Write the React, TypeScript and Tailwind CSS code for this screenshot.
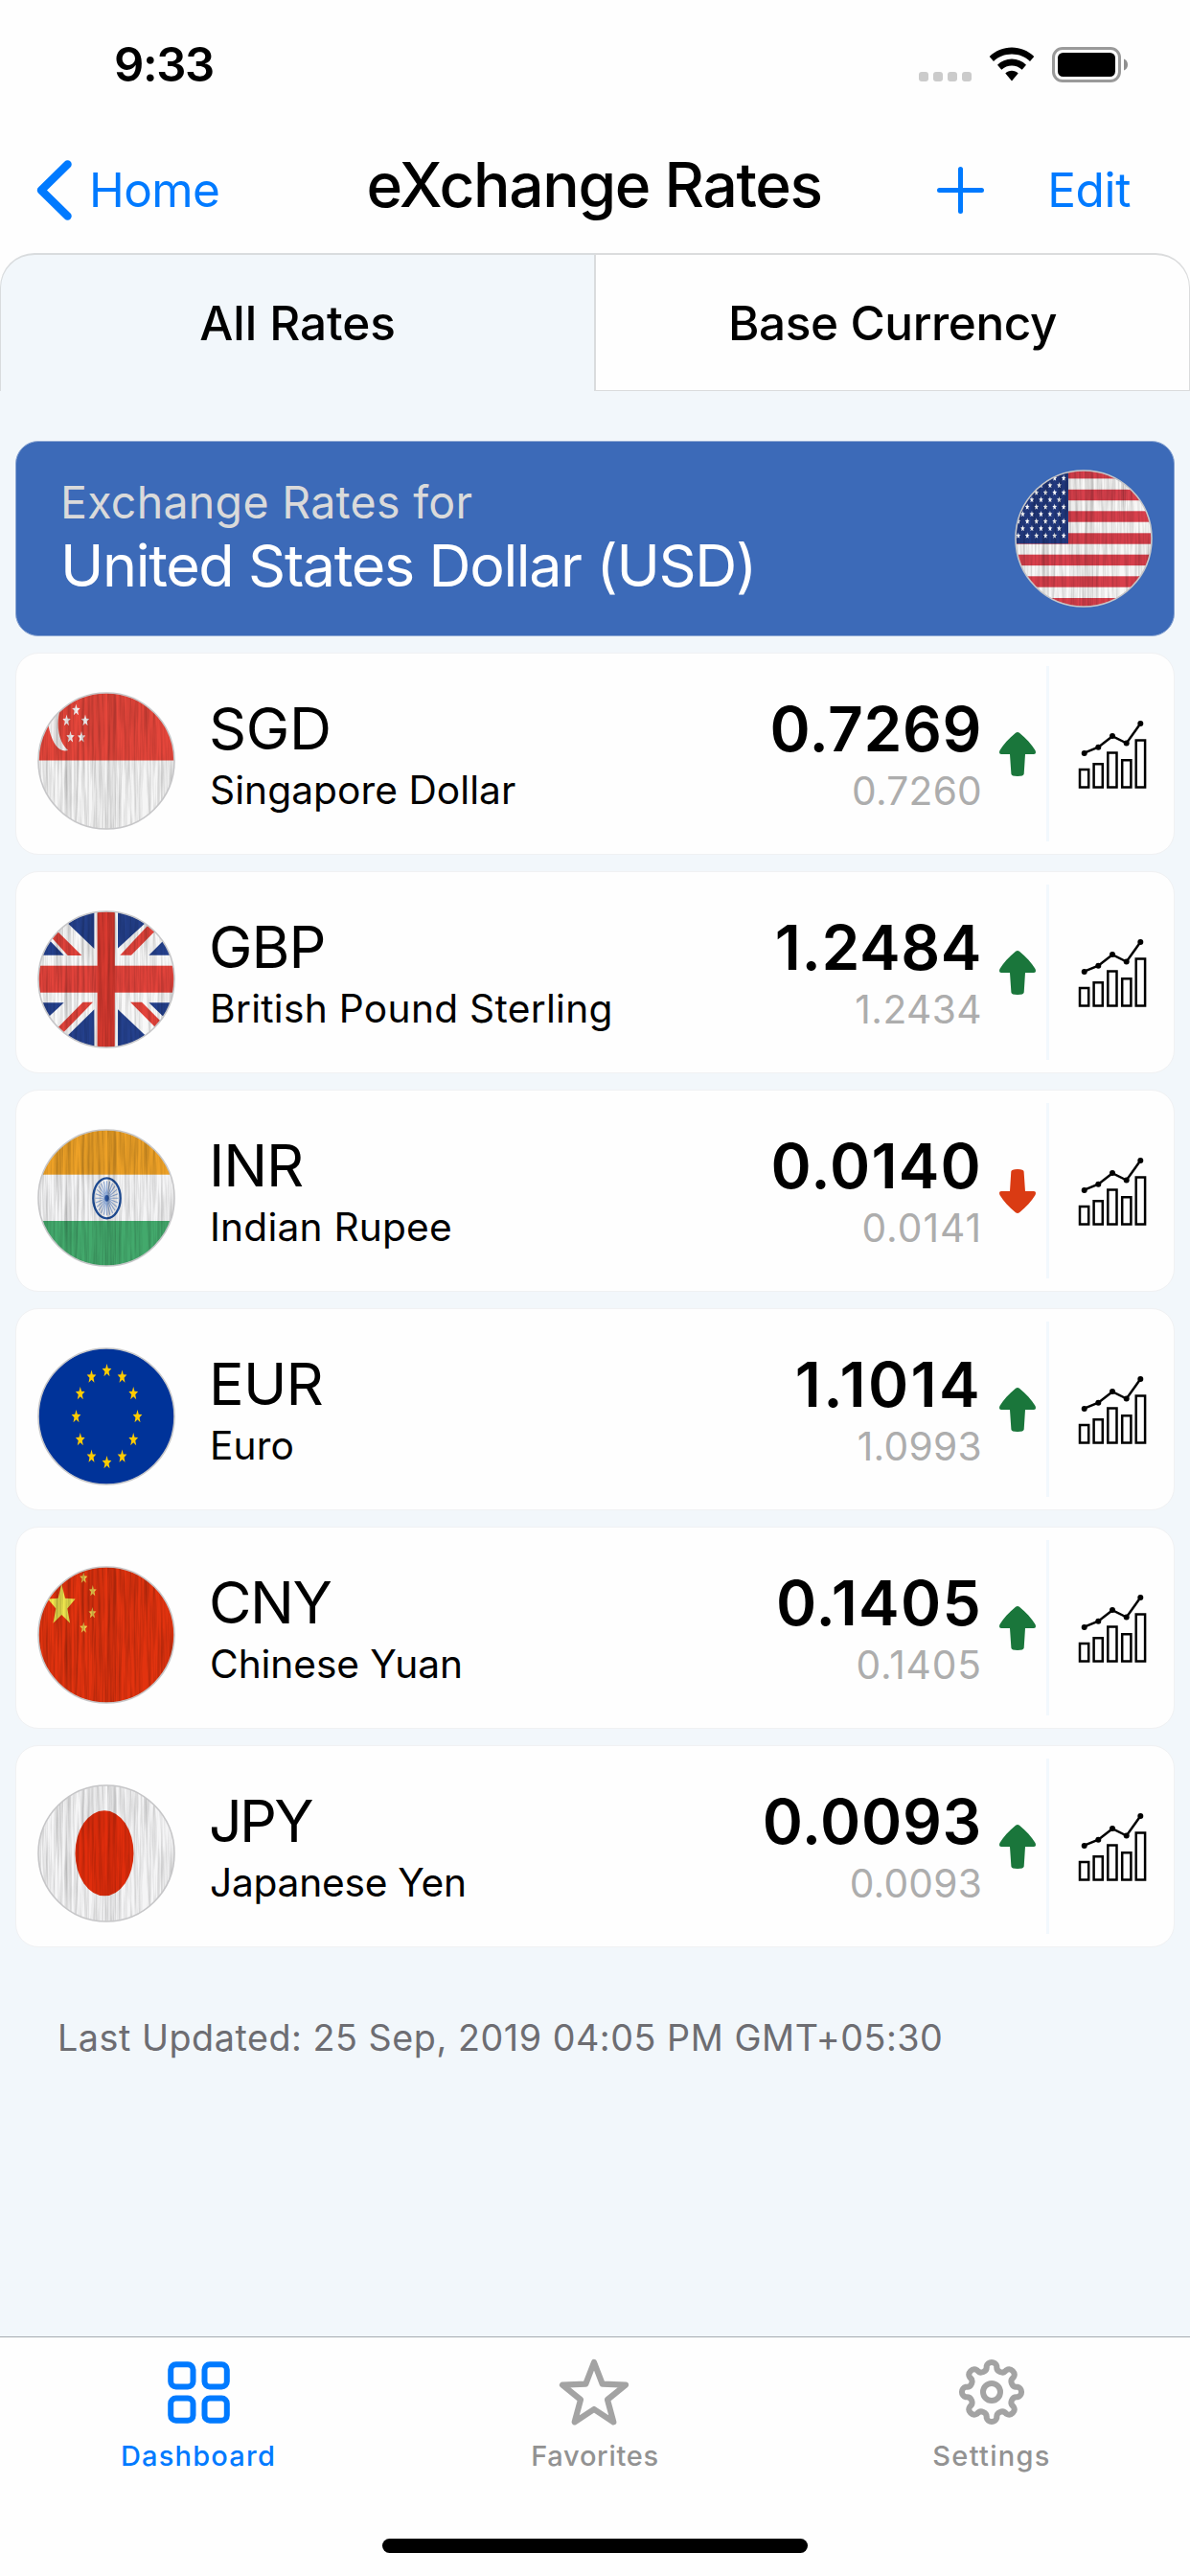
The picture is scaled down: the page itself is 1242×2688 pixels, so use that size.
import type { ReactNode } from "react";

type Rate = {
  code: string;
  name: string;
  rate: string;
  previous: string;
  up: boolean;
  flag: ReactNode;
  codeClass: string;
  nameClass: string;
  rateClass: string;
  previousClass: string;
};

function starPoints(cx: number, cy: number, rx: number, ry: number) {
  return Array.from({ length: 10 }, (_, i) => {
    const k = i % 2 === 0 ? 1 : 0.42;
    const a = (Math.PI / 5) * i - Math.PI / 2;
    return `${(cx + rx * k * Math.cos(a)).toFixed(2)},${(cy + ry * k * Math.sin(a)).toFixed(2)}`;
  }).join(" ");
}

function Star({ cx, cy, rx, ry, fill }: { cx: number; cy: number; rx: number; ry: number; fill: string }) {
  return <polygon points={starPoints(cx, cy, rx, ry)} fill={fill} />;
}

function FlagDisc({ id, grain = 1, children }: { id: string; grain?: number; children: ReactNode }) {
  return (
    <svg viewBox="0 0 144 144" className="size-36 shrink-0" aria-hidden="true">
      <defs>
        <clipPath id={`${id}-clip`}>
          <circle cx="72" cy="72" r="71" />
        </clipPath>
        <filter id={`${id}-grain`} x="0" y="0" width="100%" height="100%">
          <feTurbulence type="fractalNoise" baseFrequency="0.34 0.014" numOctaves="3" seed="7" />
          <feColorMatrix values="0 0 0 0 0  0 0 0 0 0  0 0 0 0 0  2 0 0 0 -0.75" />
        </filter>
      </defs>
      <g clipPath={`url(#${id}-clip)`}>
        {children}
        {grain > 0 && (
          <g>
            <rect width="144" height="144" filter={`url(#${id}-grain)`} opacity={0.28 * grain} />
            <rect x="57" width="7" height="144" fill="#000" opacity={0.05 * grain} />
            <rect x="73" width="9" height="144" fill="#000" opacity={0.07 * grain} />
            <rect x="28" width="8" height="144" fill="#000" opacity={0.04 * grain} />
          </g>
        )}
      </g>
      <circle cx="72" cy="72" r="71" fill="none" stroke="#c6c6c8" strokeWidth="1.6" />
    </svg>
  );
}

function SingaporeFlag() {
  return (
    <FlagDisc id="sg" grain={0.85}>
      <rect width="144" height="144" fill="#f5f5f5" />
      <rect width="144" height="71.5" fill="#e5463b" />
      <path d="M24 17C19 34 22 52 32 61C22 64 14 52 11 32Z" fill="#f1eeee" />
      {[[40.4, 19], [30.5, 30], [50, 30], [34.5, 47.2], [46, 47.4]].map(([x, y]) => (
        <Star key={`${x}`} cx={x} cy={y} rx={4.4} ry={6.4} fill="#f4f0f0" />
      ))}
    </FlagDisc>
  );
}

function BritishFlag() {
  return (
    <FlagDisc id="gb" grain={0.85}>
      <rect width="144" height="144" fill="#f9f9f9" />
      <g fill="#24408c">
        <polygon points="17.8,0 59.4,0 59.4,40" />
        <polygon points="84,0 127,0 84,39.5" />
        <polygon points="0,18 0,46.7 27.7,46.7" />
        <polygon points="116.4,46.7 144,46.7 144,19" />
        <polygon points="0,96.3 27.7,96.3 0,122" />
        <polygon points="116.4,96.3 144,96.3 144,123" />
        <polygon points="59.4,103.3 59.4,144 18,144" />
        <polygon points="84,103.3 84,144 127,144" />
      </g>
      <g fill="#e2433b">
        <polygon points="0,1 46.3,47 31.7,47 0,12" />
        <polygon points="86.3,46.7 98,46.7 144,0 130,0" />
        <polygon points="47.5,95.7 58,95.7 11,144 0,144" />
        <polygon points="97,95.7 109,95.7 144,131 144,143" />
        <rect y="57.7" width="144" height="28" />
      </g>
      <rect x="62.6" width="18.2" height="144" fill="#d93a30" />
    </FlagDisc>
  );
}

function IndianFlag() {
  return (
    <FlagDisc id="in" grain={0.85}>
      <rect width="144" height="144" fill="#f5f5f6" />
      <rect width="144" height="47.7" fill="#eda127" />
      <rect y="96" width="144" height="48" fill="#43a96c" />
      {Array.from({ length: 24 }, (_, i) => {
        const a = (Math.PI / 12) * i;
        return (
          <line
            key={i}
            x1="72.5"
            y1="72.3"
            x2={72.5 + 12 * Math.cos(a)}
            y2={72.3 + 18 * Math.sin(a)}
            stroke="#8fabd8"
            strokeWidth="1.1"
          />
        );
      })}
      <ellipse cx="72.5" cy="72.3" rx="14.2" ry="21" fill="none" stroke="#20509c" strokeWidth="2.3" />
      <ellipse cx="72.5" cy="72.3" rx="2.2" ry="3.4" fill="#2a55a0" />
    </FlagDisc>
  );
}

function EuropeanFlag() {
  return (
    <FlagDisc id="eu" grain={0}>
      <rect width="144" height="144" fill="#003399" />
      {Array.from({ length: 12 }, (_, i) => {
        const a = (Math.PI / 6) * i;
        return (
          <Star
            key={i}
            cx={72.5 + 32 * Math.sin(a)}
            cy={72.3 - 48 * Math.cos(a)}
            rx={5.1}
            ry={7.3}
            fill="#ffcc00"
          />
        );
      })}
    </FlagDisc>
  );
}

function ChineseFlag() {
  return (
    <FlagDisc id="cn">
      <rect width="144" height="144" fill="#e2330f" />
      <Star cx={25.3} cy={41.5} rx={15} ry={22.5} fill="#f0e74e" />
      {[[48.3, 12.7], [57.8, 26.3], [57.4, 49.3], [48.3, 64.7]].map(([x, y]) => (
        <Star key={`${y}`} cx={x} cy={y} rx={4.2} ry={6.2} fill="#f2d04e" />
      ))}
    </FlagDisc>
  );
}

function JapaneseFlag() {
  return (
    <FlagDisc id="jp" grain={0.8}>
      <rect width="144" height="144" fill="#f5f5f6" />
      <ellipse cx="70" cy="71.8" rx="30.5" ry="44.5" fill="#e02d0c" />
    </FlagDisc>
  );
}

function AmericanFlag() {
  const stars: [number, number][] = [];
  for (let row = 0; row < 10; row++) {
    for (let col = 0; col < 6; col++) {
      const x = 51.2 - col * 9.5 - (row % 2 ? 4.75 : 0);
      if (x > 0) stars.push([x, 69 - row * 7.5]);
    }
  }
  return (
    <FlagDisc id="us" grain={0.85}>
      <rect width="144" height="144" fill="#f9f8f7" />
      {[-2, 20.8, 43.3, 66.3, 88.7, 111.3, 134].map((y) => (
        <rect key={y} y={y} width="144" height="11.4" fill="#d8404c" />
      ))}
      <rect width="56" height="77.3" fill="#22397f" />
      {stars.map(([x, y]) => (
        <Star key={`${x}-${y}`} cx={x} cy={y} rx={2.5} ry={3.4} fill="#ffffff" />
      ))}
    </FlagDisc>
  );
}

const rates: Rate[] = [
  {
    code: "SGD", name: "Singapore Dollar", rate: "0.7269", previous: "0.7260", up: true, flag: <SingaporeFlag />,
    codeClass: "tracking-[-0.3px]", nameClass: "tracking-[0.05px]", rateClass: "tracking-[0.57px]", previousClass: "tracking-[0.23px]",
  },
  {
    code: "GBP", name: "British Pound Sterling", rate: "1.2484", previous: "1.2434", up: true, flag: <BritishFlag />,
    codeClass: "tracking-[-0.96px]", nameClass: "tracking-[0.28px]", rateClass: "tracking-[0.61px]", previousClass: "tracking-[0.43px]",
  },
  {
    code: "INR", name: "Indian Rupee", rate: "0.0140", previous: "0.0141", up: false, flag: <IndianFlag />,
    codeClass: "tracking-[-1.17px]", nameClass: "tracking-[0.19px]", rateClass: "tracking-[1.2px]", previousClass: "tracking-[1px]",
  },
  {
    code: "EUR", name: "Euro", rate: "1.1014", previous: "1.0993", up: true, flag: <EuropeanFlag />,
    codeClass: "tracking-[-0.78px]", nameClass: "tracking-[0.1px]", rateClass: "tracking-[2.4px]", previousClass: "tracking-[0.3px]",
  },
  {
    code: "CNY", name: "Chinese Yuan", rate: "0.1405", previous: "0.1405", up: true, flag: <ChineseFlag />,
    codeClass: "tracking-[-1.51px]", nameClass: "tracking-[-0.09px]", rateClass: "tracking-[1.3px]", previousClass: "tracking-[0.9px]",
  },
  {
    code: "JPY", name: "Japanese Yen", rate: "0.0093", previous: "0.0093", up: true, flag: <JapaneseFlag />,
    codeClass: "tracking-[-2.8px]", nameClass: "tracking-[-0.26px]", rateClass: "tracking-[0.7px]", previousClass: "tracking-[0.2px]",
  },
];

function TrendArrow({ up }: { up: boolean }) {
  return (
    <svg
      viewBox="0 0 38 46"
      className={up ? "mt-[82px] ml-[18px] h-[46px] w-[38px] text-[#1a763b]" : "mt-[82px] ml-[18px] h-[46px] w-[38px] rotate-180 text-[#da3b13]"}
      aria-hidden="true"
    >
      <path
        d="M17 .8Q19-.6 21 .8C28 6.500 34 13 37.500 19Q39 23 36 23H27L25.700 43.500Q25.500 46 19 46T12.400 43.500L11 23H2Q-1 23 .5 19C4 13 10 6.500 17 .8Z"
        fill="currentColor"
      />
    </svg>
  );
}

function ChartIcon() {
  return (
    <svg viewBox="0 0 73 73" className="mt-[69px] ml-[30px] size-[73px]" fill="none" stroke="#000" strokeWidth="2.5" aria-hidden="true">
      <path d="M2 52h9.200v18.600H2zM16.600 46.300h9.200v24.300h-9.200zM31.300 34.600h9.200v36h-9.200zM46.200 42.200h9.200v28.400h-9.200zM60.700 21.400h9.400v49.200h-9.400z" />
      <path d="M6.700 34.700 21.300 28.700 36 17.200 50.700 24.500 65.300 4" />
      <g fill="#000" stroke="none">
        <circle cx="6.700" cy="34.900" r="3" />
        <circle cx="21.300" cy="28.800" r="3" />
        <circle cx="36" cy="17" r="3" />
        <circle cx="50.700" cy="24.500" r="3" />
        <circle cx="65.300" cy="4" r="3" />
      </g>
    </svg>
  );
}

function RateCard({ item }: { item: Rate }) {
  return (
    <li className="flex h-[211px] items-start rounded-[24px] border border-[#f0f1f3] bg-[#fefefe] pl-[22px]">
      <div className="pt-10">{item.flag}</div>
      <div className="flex-1 pt-[42px] pl-[35px]">
        <div className={`text-[61px] leading-[72px] ${item.codeClass}`}>{item.code}</div>
        <div className={`pl-px text-[40.7px] leading-[58px] ${item.nameClass}`}>{item.name}</div>
      </div>
      <div className="pt-[43px] text-right">
        <div className={`text-[64px] leading-[72px] font-semibold ${item.rateClass}`}>{item.rate}</div>
        <div className={`text-[40.7px] leading-[57px] text-[#adadad] ${item.previousClass}`}>{item.previous}</div>
      </div>
      <TrendArrow up={item.up} />
      <div className="mt-[13px] ml-[11px] h-[183px] w-[3px] bg-[#f2f8fd]" />
      <div className="w-[130px]">
        <ChartIcon />
      </div>
    </li>
  );
}

function StatusBar() {
  return (
    <div className="flex h-[132px] items-start justify-between pr-[64px] pl-[119px]">
      <div className="pt-[38px] text-[49px] leading-[60px] font-semibold tracking-[-1.38px]">9:33</div>
      <div className="flex items-start pt-[49px]">
        <div className="mt-[26px] flex gap-[5px]">
          <span className="h-[10px] w-[10px] rounded-[3px] bg-[#cbcbcb]" />
          <span className="h-[10px] w-[10px] rounded-[3px] bg-[#cbcbcb]" />
          <span className="h-[10px] w-[10px] rounded-[3px] bg-[#cbcbcb]" />
          <span className="h-[10px] w-[10px] rounded-[3px] bg-[#cbcbcb]" />
        </div>
        <svg viewBox="0 0 48 36" className="ml-[18px] h-9 w-12" aria-hidden="true">
          <path d="M24 .5C33 .5 41 4 47.300 10L43 15C38 10.200 31.500 7.500 24 7.500S10 10.200 5 15L.7 10C7 4 15 .5 24 .5Z" />
          <path d="M24 12.500C30 12.500 35 14.800 39 18.700L34.700 23.700C31.700 21 28 19.500 24 19.500S16.300 21 13.300 23.700L9 18.700C13 14.800 18 12.500 24 12.500Z" />
          <path d="M24 24.800C26.600 24.800 28.900 25.800 30.700 27.500L24 35.500L17.300 27.500C19.100 25.800 21.400 24.800 24 24.800Z" />
        </svg>
        <svg viewBox="0 0 80 37" className="ml-[18px] h-[37px] w-20" aria-hidden="true">
          <rect x="1.500" y="1.500" width="69" height="34" rx="9.500" fill="none" stroke="#9a9a9a" strokeWidth="3" />
          <rect x="6" y="6" width="60" height="25" rx="5.500" />
          <path d="M75 12.500C77.600 13.500 79 15.800 79 18.500S77.600 23.500 75 24.500Z" fill="#8f8f8f" />
        </svg>
      </div>
    </div>
  );
}

function NavBar() {
  return (
    <header className="grid h-[132px] grid-cols-[1fr_auto_1fr] items-center">
      <button className="flex items-center pl-[38px] text-[#007aff]">
        <svg viewBox="0 0 38 63" className="h-[63px] w-[38px]" fill="none" aria-hidden="true">
          <path d="M32.500 4.500 5 31.500 32.500 58.500" stroke="currentColor" strokeWidth="8.500" strokeLinecap="round" strokeLinejoin="round" />
        </svg>
        <span className="ml-[17px] text-[49.5px] leading-[60px] tracking-[-0.61px]">Home</span>
      </button>
      <h1 className="mr-[2px] pb-[11px] text-[64px] leading-[72px] font-medium tracking-[-1.36px]">eXchange Rates</h1>
      <div className="flex items-center justify-end pr-[62px] text-[#007aff]">
        <svg viewBox="0 0 49 49" className="h-[49px] w-[49px]" fill="none" aria-hidden="true">
          <path d="M24.500 2.500V46.500M2.500 24.500H46.500" stroke="currentColor" strokeWidth="5" strokeLinecap="round" />
        </svg>
        <span className="ml-[66px] text-[49.5px] leading-[60px] tracking-[-0.35px]">Edit</span>
      </div>
    </header>
  );
}

function Tabs() {
  return (
    <div className="grid h-36 grid-cols-2 text-center text-[49.5px] leading-[60px] font-medium">
      <div className="flex items-center justify-center rounded-tl-[36px] border-t-2 border-r border-l border-[#d9dcde] bg-[#f2f7fb] tracking-[-0.08px]">
        All Rates
      </div>
      <div className="flex items-center justify-center rounded-tr-[36px] border-t-2 border-r border-b border-l border-[#dbdcdd] bg-[#fefefe] tracking-[-0.42px]">
        Base Currency
      </div>
    </div>
  );
}

function DashboardIcon() {
  return (
    <svg viewBox="0 0 65 65" className="size-[65px]" fill="none" stroke="currentColor" strokeWidth="6" aria-hidden="true">
      <rect x="3.200" y="3.200" width="23.300" height="23.300" rx="5.500" />
      <rect x="38.500" y="3.200" width="23.300" height="23.300" rx="5.500" />
      <rect x="3.200" y="38.500" width="23.300" height="23.300" rx="5.500" />
      <rect x="38.500" y="38.500" width="23.300" height="23.300" rx="5.500" />
    </svg>
  );
}

function FavoritesIcon() {
  return (
    <svg viewBox="0 0 72 72" className="size-[72px] overflow-visible" fill="none" stroke="#a3a3a3" strokeWidth="6.200" strokeLinejoin="round" aria-hidden="true">
      <polygon points="35,5 43.700,27.600 68,28.700 49,44 55.300,67.300 35,54 14.700,67.300 21,44 2,28.700 26.300,27.600" />
    </svg>
  );
}

const gearPath = (() => {
  const r = 27.4;
  const at = (i: number) => {
    const a = ((i * 22.5 - 101.25) * Math.PI) / 180;
    return `${(36 + r * Math.cos(a)).toFixed(2)} ${(36 + r * Math.sin(a)).toFixed(2)}`;
  };
  let d = `M${at(0)}`;
  for (let i = 1; i <= 16; i++) d += `A5.500 5.500 0 0 ${i % 2} ${at(i)}`;
  return `${d}Z`;
})();

function SettingsIcon() {
  return (
    <svg viewBox="0 0 72 72" className="size-[72px]" fill="none" stroke="#a3a3a3" strokeWidth="6" aria-hidden="true">
      <path d={gearPath} strokeLinejoin="round" />
      <circle cx="36" cy="36" r="9" />
    </svg>
  );
}

function TabItem({ icon, label, className }: { icon: ReactNode; label: string; className: string }) {
  return (
    <div className={`flex flex-col items-center text-[29px] leading-9 font-medium ${className}`}>
      <div className="flex h-[72px] items-center">{icon}</div>
      <span className="mt-[13px]">{label}</span>
    </div>
  );
}

export default function App() {
  return (
    <div className="flex h-[2688px] w-[1242px] flex-col overflow-hidden bg-[#fefefe] font-['Inter',sans-serif] text-black">
      <StatusBar />
      <NavBar />
      <Tabs />
      <main className="flex-1 bg-[#f2f7fb] px-4 pt-[52px]">
        <section className="flex h-[204px] items-start justify-between rounded-[24px] border border-[#8ba6d3] bg-[#3c6ab8] pr-[22px]">
          <div className="pt-[33px] pl-[46px]">
            <p className="text-[46.5px] leading-[60px] tracking-[0.28px] text-[#dadada]">Exchange Rates for</p>
            <p className="text-[61px] leading-[73px] tracking-[-1.36px] text-white">United States Dollar (USD)</p>
          </div>
          <div className="pt-[29px]">
            <AmericanFlag />
          </div>
        </section>
        <ul className="mt-[17px] flex flex-col gap-[17px]">
          {rates.map((item) => (
            <RateCard key={item.code} item={item} />
          ))}
        </ul>
        <p className="mt-[69px] pl-[44px] text-[37.7px] leading-[50px] tracking-[0.53px] text-[#6d6d72]">
          Last Updated: 25 Sep, 2019 04:05 PM GMT+05:30
        </p>
      </main>
      <nav className="h-[250px] border-t border-[#a5abb0] bg-[#fefefe] pt-[21px]">
        <div className="grid grid-cols-3">
          <TabItem icon={<DashboardIcon />} label="Dashboard" className="tracking-[1.21px] text-[#007aff]" />
          <TabItem icon={<FavoritesIcon />} label="Favorites" className="tracking-[0.72px] text-[#929292]" />
          <TabItem icon={<SettingsIcon />} label="Settings" className="tracking-[1.3px] text-[#929292]" />
        </div>
        <div className="mx-auto mt-[68px] h-[15px] w-[444px] rounded-full bg-black" />
      </nav>
    </div>
  );
}
